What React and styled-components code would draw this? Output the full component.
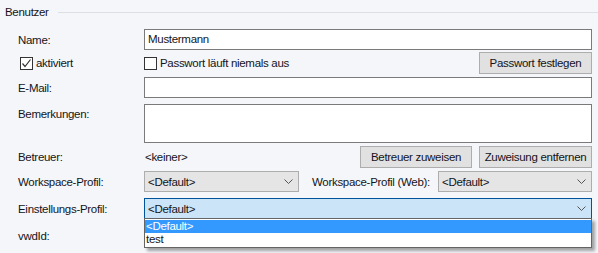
import styled, { createGlobalStyle } from 'styled-components';

const GlobalStyle = createGlobalStyle`
  body {
    margin: 0;
    background: #f5f6fa;
  }
`;

const Page = styled.div`
  width: 598px;
  height: 253px;
  overflow: hidden;
  background: #f5f6fa;
  font-family: "Liberation Sans", Arial, sans-serif;
  font-size: 11.5px;
  letter-spacing: -0.3px;
  color: #141420;
`;

const GroupHeader = styled.div`
  display: flex;
  align-items: center;
  height: 24px;
  padding-left: 5px;
  gap: 9px;

  &::after {
    content: "";
    flex: 1;
    height: 1px;
    background: #dcdfe6;
  }
`;

const Form = styled.div`
  padding: 5px 6px 0 18px;
`;

const Row = styled.div`
  display: grid;
  grid-template-columns: 126px 1fr;
  height: ${(p) => p.$h}px;
  margin-top: ${(p) => p.$mt || 0}px;
`;

const Label = styled.div`
  align-self: ${(p) => (p.$top ? 'start' : 'center')};
  padding-top: ${(p) => (p.$top ? 4 : 0)}px;
  white-space: nowrap;
`;

const Controls = styled.div`
  display: flex;
  align-items: center;
  gap: ${(p) => p.$gap || 0}px;
  position: relative;
  min-width: 0;
`;

const TextBox = styled.div`
  box-sizing: border-box;
  width: 100%;
  height: 100%;
  border: 1px solid #7a7a7a;
  background: #fff;
  padding: 3px 3px 0;
`;

const Button = styled.div`
  box-sizing: border-box;
  width: ${(p) => p.$w || 113}px;
  height: 22px;
  border: 1px solid #adadad;
  background: #e1e1e1;
  display: flex;
  align-items: center;
  justify-content: center;
  white-space: nowrap;
`;

const Spacer = styled.div`
  flex: 1;
`;

const Check = styled.label`
  display: flex;
  align-items: center;
  gap: 3px;
  white-space: nowrap;
  margin-left: ${(p) => p.$ml || 0}px;
`;

const Box = styled.span`
  box-sizing: border-box;
  width: 13px;
  height: 13px;
  border: 1px solid #333;
  background: #fff;
  display: flex;
  align-items: center;
  justify-content: center;
`;

const Plain = styled.span`
  padding-left: 1px;
`;

const ComboBox = styled.div`
  box-sizing: border-box;
  width: ${(p) => (p.$w ? `${p.$w}px` : 'auto')};
  flex: ${(p) => (p.$w ? 'none' : 1)};
  height: 21px;
  border: 1px solid ${(p) => (p.$open ? '#005499' : '#adadad')};
  background: ${(p) => (p.$open ? '#cce4f7' : '#e5e5e5')};
  display: flex;
  align-items: center;
  padding: 0 5px 0 3px;
  white-space: nowrap;
`;

const SubLabel = styled.div`
  width: 126px;
  margin-left: 13px;
  white-space: nowrap;
`;

const DropList = styled.div`
  position: absolute;
  left: 0;
  right: 0;
  top: 20px;
  box-sizing: border-box;
  border: 1px solid #646464;
  background: #fff;
  padding: 1px 0;
  box-shadow: 3px 3px 3px rgba(0, 0, 0, 0.35);
  z-index: 2;
`;

const Option = styled.div`
  height: 13px;
  line-height: 13px;
  padding-left: 1px;
  background: ${(p) => (p.$sel ? '#3399ff' : 'transparent')};
  color: ${(p) => (p.$sel ? '#fff' : '#141420')};
`;

const Chevron = () => (
  <svg width="9" height="5" viewBox="0 0 9 5">
    <polyline points="0.5,0.5 4.5,4.5 8.5,0.5" fill="none" stroke="#555" strokeWidth="1" />
  </svg>
);

const Tick = () => (
  <svg width="11" height="11" viewBox="0 0 11 11">
    <polyline points="1.5,5.5 4,8.5 9.5,1.5" fill="none" stroke="#333" strokeWidth="1.2" />
  </svg>
);

const Combo = ({ value, w, open }) => (
  <ComboBox $w={w} $open={open}>
    <span>{value}</span>
    <Spacer />
    <Chevron />
  </ComboBox>
);

export default function App() {
  return (
    <Page>
      <GlobalStyle />
      <GroupHeader>Benutzer</GroupHeader>
      <Form>
        <Row $h={21}>
          <Label>Name:</Label>
          <Controls>
            <TextBox>Mustermann</TextBox>
          </Controls>
        </Row>

        <Row $h={22} $mt={2}>
          <Check $ml={2}>
            <Box><Tick /></Box>
            aktiviert
          </Check>
          <Controls>
            <Check>
              <Box />
              Passwort läuft niemals aus
            </Check>
            <Spacer />
            <Button>Passwort festlegen</Button>
          </Controls>
        </Row>

        <Row $h={21} $mt={3}>
          <Label>E-Mail:</Label>
          <Controls>
            <TextBox />
          </Controls>
        </Row>

        <Row $h={39} $mt={6}>
          <Label $top>Bemerkungen:</Label>
          <Controls>
            <TextBox />
          </Controls>
        </Row>

        <Row $h={23} $mt={2}>
          <Label>Betreuer:</Label>
          <Controls $gap={7}>
            <Plain>&lt;keiner&gt;</Plain>
            <Spacer />
            <Button $w={112}>Betreuer zuweisen</Button>
            <Button>Zuweisung entfernen</Button>
          </Controls>
        </Row>

        <Row $h={21} $mt={3}>
          <Label>Workspace-Profil:</Label>
          <Controls>
            <Combo value="<Default>" w={155} />
            <SubLabel>Workspace-Profil (Web):</SubLabel>
            <Combo value="<Default>" />
          </Controls>
        </Row>

        <Row $h={21} $mt={6}>
          <Label>Einstellungs-Profil:</Label>
          <Controls>
            <Combo value="<Default>" open />
            <DropList>
              <Option $sel>&lt;Default&gt;</Option>
              <Option>test</Option>
            </DropList>
          </Controls>
        </Row>

        <Row $h={21} $mt={6}>
          <Label>vwdId:</Label>
          <Controls />
        </Row>
      </Form>
    </Page>
  );
}
